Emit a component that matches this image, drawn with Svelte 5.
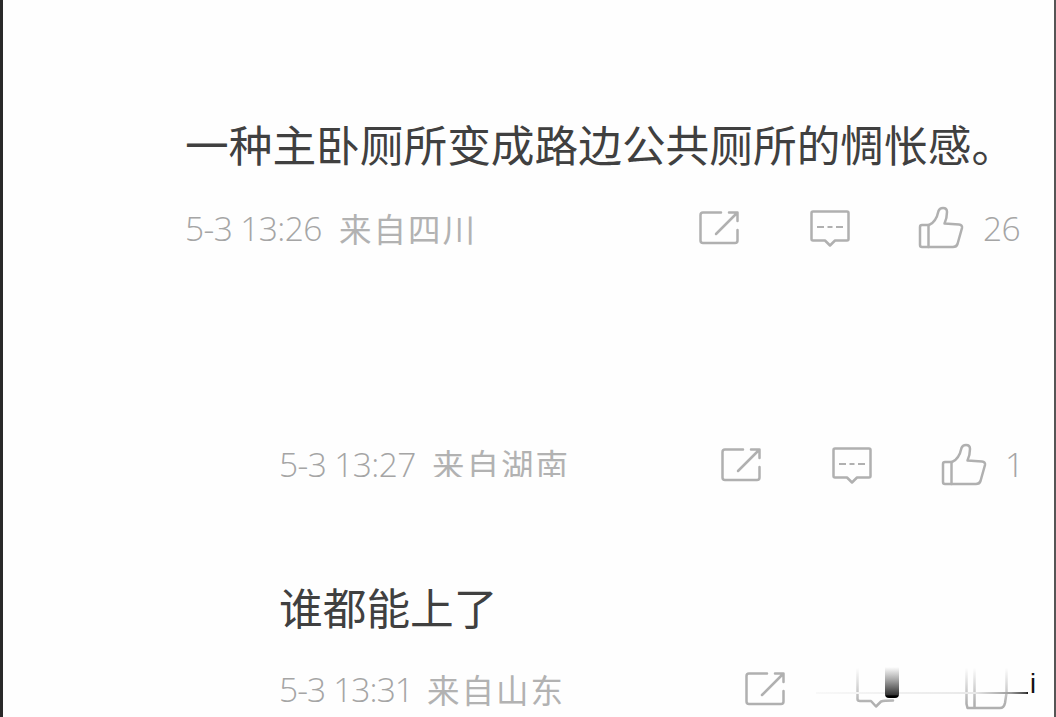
<script>
  const comments = [
    { id: 'first', text: '一种主卧厕所变成路边公共厕所的惆怅感。', time: '5-3 13:26', place: '来自四川', likes: '26' },
    { id: 'second', text: '', time: '5-3 13:27', place: '来自湖南', likes: '1' },
    { id: 'third', text: '谁都能上了', time: '5-3 13:31', place: '来自山东', likes: '' }
  ];
</script>

<main>
  {#each comments as c (c.id)}
    <article class={c.id}>
      {#if c.text}<p>{c.text}</p>{/if}
      <footer>
        <div class="meta"><span class="time">{c.time}</span><span class="place">{c.place}</span></div>
        <div class="actions">
          <svg class="share" viewBox="0 0 44 44">
            <path d="M24 6.500H6Q3.500 6.500 3.500 9V34.500Q3.500 37 6 37H38Q40.500 37 40.500 34.500V24" />
            <path d="M19 28 39 8M32 6.500H40.500V15" />
          </svg>
          <svg class="reply" viewBox="0 0 44 44">
            {#if c.id === 'third'}
              <path d="M3.500 0V32Q3.500 34 6 34H17L22 39.500 27 34.500Q30 33.500 39 33.500" />
            {:else}
              <path d="M5 5.500H39Q40.500 5.500 40.500 7V33Q40.500 34.500 39 34.500H27L22 39.500 17 34.500H5Q3.500 34.500 3.500 33V7Q3.500 5.500 5 5.500Z" />
              <path class="dots" d="M9 21h7m3.500 0h5m3.500 0h7" />
            {/if}
          </svg>
          <svg class="like" viewBox="0 0 48 48">
            {#if c.id === 'third'}
              <path d="M3.500 0V38L4.500 42H37Q41 42 42 37L43.500 27V0M11.500 0V42" />
            {:else}
              <path d="M4 22Q4 20 6 20H13C18 18 21 13 22.500 6Q23.500 3 27 3Q31 3 31 7Q31 13 28.500 18.500L43 19.500Q46.500 20 46 23L41.500 39Q40.500 42 37 42H6Q4 42 4 40Z" />
              <path d="M12.500 20V42" />
            {/if}
          </svg>
          <span class="count">{c.likes}</span>
        </div>
      </footer>
    </article>
  {/each}
  <div class="smear"><span class="haze"></span><span class="line"></span><span class="thumb"></span><span class="mark">i</span></div>
</main>

<style>
  :global(body) { background: #fefefe; overflow: hidden; }
  main {
    position: relative;
    box-sizing: border-box;
    width: 1056px;
    height: 717px;
    overflow: hidden;
    border-left: 3px solid #292929;
    border-right: 2px solid #555;
    background: #fefefe;
    font-family: "Noto Sans CJK SC", sans-serif;
  }
  article { padding-left: 182px; }
  .first { padding-top: 113px; }
  .second { padding: 177px 0 0 276px; }
  .third { padding: 79px 0 0 276px; }
  p { margin: 0; height: 60px; line-height: 60px; font-size: 43.700px; color: #404040; white-space: nowrap; }
  footer { display: flex; justify-content: space-between; height: 60px; margin-top: 25px; }
  .first footer { margin-top: 27px; }
  .second footer { margin-top: 0; }
  .meta { display: flex; height: 56px; line-height: 56px; color: #b2b2b2; white-space: nowrap; }
  .second .meta { height: 40px; line-height: 54px; overflow: hidden; }
  .time { width: 153px; font-family: "Open Sans", sans-serif; font-size: 33.500px; font-weight: 300; color: #a5a5a5; letter-spacing: -.6px; }
  .first .time { width: 154px; }
  .third .time { width: 148px; letter-spacing: -.9px; }
  .place { font-size: 32.500px; letter-spacing: 2px; }
  .actions { display: flex; }
  svg { fill: none; stroke: #b0b0b0; stroke-width: 2.500; stroke-linejoin: round; stroke-linecap: round; }
  .share, .reply { width: 44px; height: 44px; margin: 6px 67px 0 0; }
  .like { width: 48px; height: 48px; margin: 5px 18px 0 -2px; }
  .first .like { margin-left: -3px; margin-right: 19px; }
  .dots { stroke-width: 2; stroke-linecap: butt; }
  .count { width: 71px; color: #a5a5a5; font: 300 33.500px/57px "Open Sans", sans-serif; letter-spacing: -.5px; }
  .second .count { width: 49px; line-height: 55px; }
  .third .count { width: 25px; }
  .smear { position: absolute; left: 813px; top: 665px; width: 240px; height: 45px; }
  .haze { position: absolute; inset: -2px 16px 7px 0; background: linear-gradient(#fefefe 12%, #fefefe00); }
  .thumb { position: absolute; left: 69px; top: 2px; width: 14px; height: 31px; border-radius: 0 0 4px 4px; background: linear-gradient(#fefefe, #aaa 40%, #333 90%, #000 93%); }
  .line { position: absolute; left: 0; top: 27px; width: 212px; height: 2px; background: linear-gradient(90deg, #f8f8f8, #e8e8e8 75%, #999 92%, #444 99%, #111); }
  .mark { position: absolute; left: 214px; top: 4px; font: 27px/30px "Liberation Sans", sans-serif; color: #111; }
</style>
